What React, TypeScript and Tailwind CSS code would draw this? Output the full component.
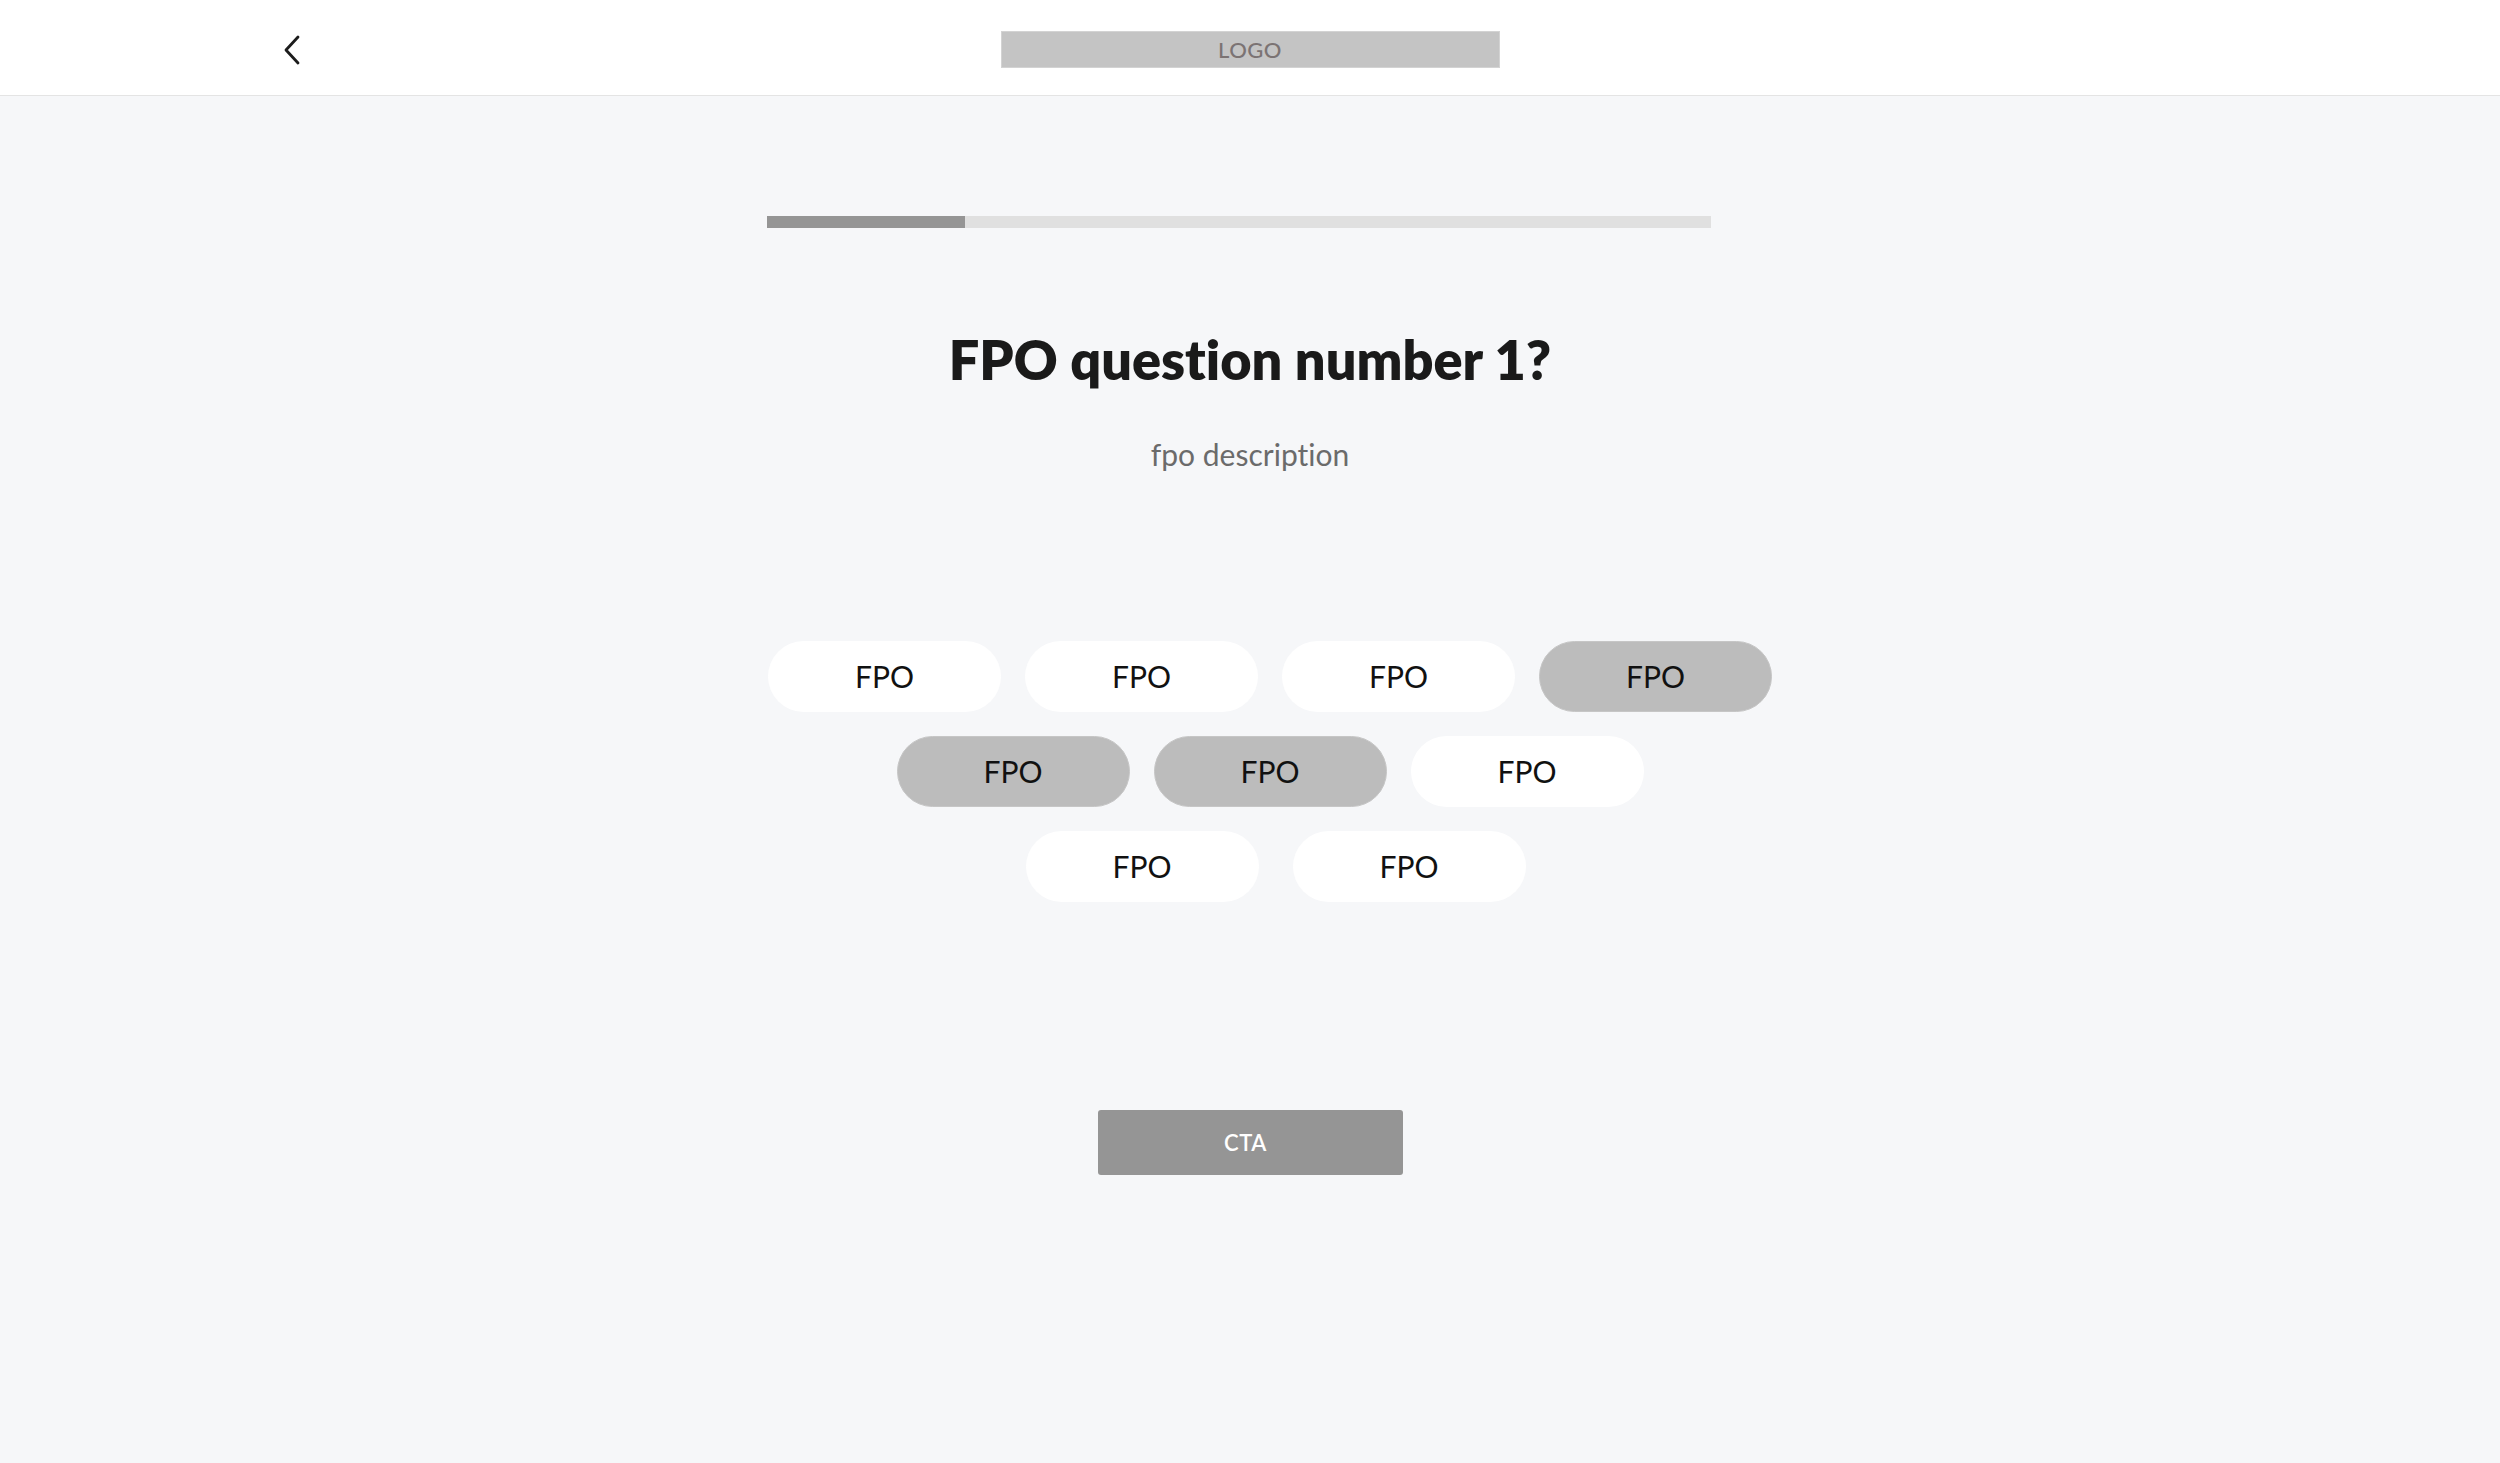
import React from "react";

const rows: { label: string; selected: boolean }[][] = [
  [
    { label: "FPO", selected: false },
    { label: "FPO", selected: false },
    { label: "FPO", selected: false },
    { label: "FPO", selected: true },
  ],
  [
    { label: "FPO", selected: true },
    { label: "FPO", selected: true },
    { label: "FPO", selected: false },
  ],
  [
    { label: "FPO", selected: false },
    { label: "FPO", selected: false },
  ],
];

function Pill({ label, selected }: { label: string; selected: boolean }) {
  return (
    <button
      type="button"
      className={
        selected
          ? "w-[233px] h-[71px] rounded-full bg-[#bcbcbc] border border-[#c6c6c6] text-[30px] text-[#111111] flex items-center justify-center"
          : "w-[233px] h-[71px] rounded-full bg-white text-[30px] text-[#111111] flex items-center justify-center"
      }
    >
      {label}
    </button>
  );
}

export default function App() {
  return (
    <div className="min-h-screen bg-[#f6f7f9] font-['Lato','Open_Sans',sans-serif] [font-variant-ligatures:none]">
      <header className="h-[96px] bg-white border-b border-[#e4e4e4] grid grid-cols-[1fr_auto_1fr] items-center pt-[4px]">
        <div className="pl-[280px] flex items-center">
          <button type="button" className="w-[24px] h-[32px] flex items-center justify-center" aria-label="Back">
            <svg width="20" height="30" viewBox="0 0 20 30" fill="none">
              <path d="M16 2 L4 15 L16 28" stroke="#1c1c1c" strokeWidth="2.8" strokeLinecap="round" strokeLinejoin="round" />
            </svg>
          </button>
        </div>
        <div className="w-[499px] h-[37px] bg-[#c4c4c4] border border-[#d3d3d3] flex items-center justify-center text-[22px] font-medium tracking-[0.5px] text-[#7b7373]">
          LOGO
        </div>
        <div />
      </header>

      <main className="flex flex-col items-center">
        <div className="w-[966px] mt-[120px]">
          <div className="w-[944px] h-[12px] bg-[#e0e0e0] flex">
            <div className="w-[198px] h-full bg-[#959595]" />
          </div>
        </div>

        <h1 className="mt-[99px] text-[54px] leading-[65px] font-extrabold text-[#1a1a1a]">
          FPO question number 1?
        </h1>
        <p className="mt-[45px] text-[30px] leading-[34px] text-[#6b6b6b]">fpo description</p>

        <div className="mt-[170px] ml-[40px] w-[1006px] flex flex-col gap-y-[24px]">
          <div className="flex justify-center gap-x-[24px]">
            {rows[0].map((p, i) => (
              <Pill key={i} {...p} />
            ))}
          </div>
          <div className="flex justify-center gap-x-[24px]">
            {rows[1].map((p, i) => (
              <Pill key={i} {...p} />
            ))}
          </div>
          <div className="flex justify-center gap-x-[34px] pl-[11px]">
            {rows[2].map((p, i) => (
              <Pill key={i} {...p} />
            ))}
          </div>
        </div>

        <button
          type="button"
          className="mt-[208px] w-[305px] h-[65px] rounded-[3px] bg-[#959595] text-white text-[22px] font-semibold tracking-[0.5px] flex items-center justify-center pr-[9px]"
        >
          CTA
        </button>
      </main>
    </div>
  );
}
